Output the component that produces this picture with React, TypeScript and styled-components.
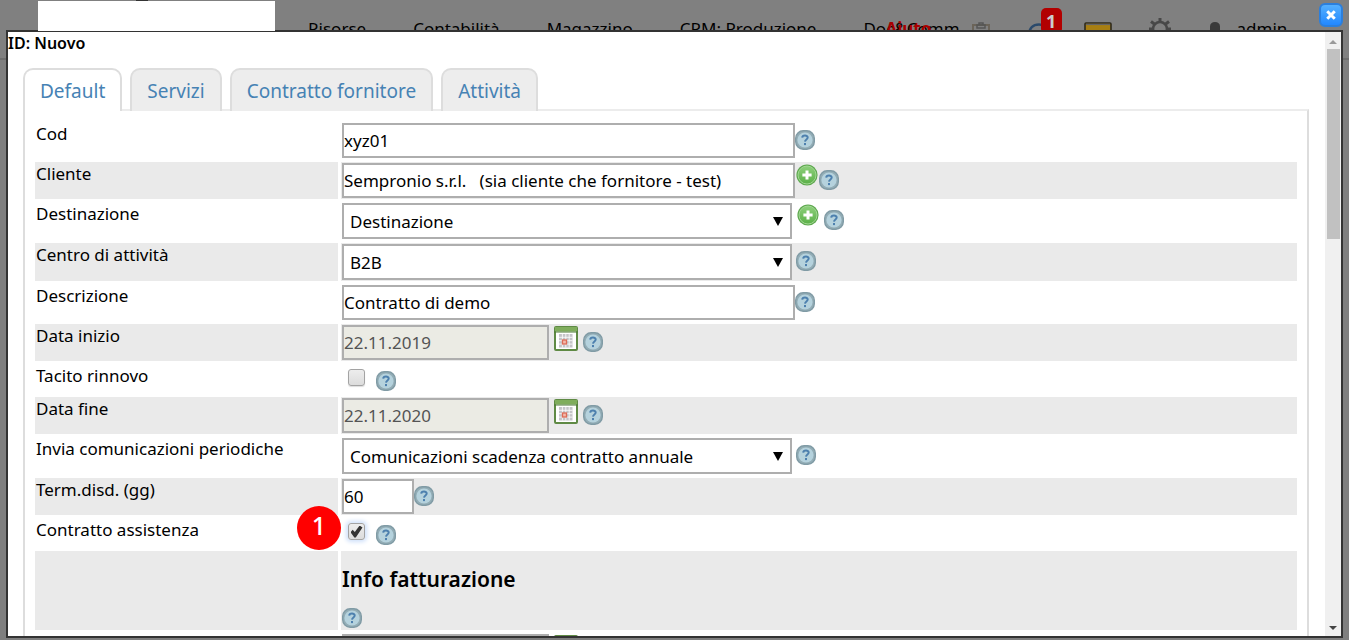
import React from "react";
import styled, { createGlobalStyle, css } from "styled-components";

const Global = createGlobalStyle`
  * { box-sizing: border-box; }
  html, body { margin: 0; height: 100%; overflow: hidden; }
  body { background: #7f7f7f; }
  body, button, input, select {
    font-family: "Noto Sans", "Open Sans", sans-serif;
    font-size: 17px;
    color: #000;
  }
`;

/* Application bar, dimmed behind the dialog */
const AppBar = styled.header`
  display: flex;
  align-items: center;
  height: 60px;
  padding-left: 38px;
  background: #808080;
  border-bottom: 2px solid #6e6e6e;
`;

const Logo = styled.div`
  position: relative;
  z-index: 3;
  flex: none;
  align-self: flex-start;
  width: 237px;
  height: 30px;
  margin: 1px 33px 0 0;
  background: #fff;
  &::before {
    content: "";
    position: absolute;
    top: -1px;
    left: 98px;
    width: 12px;
    height: 1px;
    background: #333;
  }
`;

const Nav = styled.nav`
  display: flex;
  gap: 47px;
`;

const NavLink = styled.a`
  position: relative;
  line-height: 24px;
  color: #000;
  text-decoration: none;
  white-space: nowrap;
`;

const HelpTag = styled.b`
  position: absolute;
  top: 0;
  left: 22px;
  color: #a80000;
`;

const Tools = styled.div`
  display: flex;
  align-items: center;
  gap: 36px;
  margin-left: 12px;
`;

const Tool = styled.button`
  position: relative;
  display: flex;
  padding: 0;
  border: 0;
  background: none;
`;

const Counter = styled.span`
  position: absolute;
  top: -12px;
  left: 15px;
  width: 21px;
  height: 26px;
  border-radius: 5px;
  background: #b20000;
  color: #ccc;
  font-size: 18px;
  font-weight: 700;
  line-height: 26px;
  text-align: center;
`;

const User = styled.a`
  display: flex;
  align-items: center;
  gap: 15px;
  line-height: 24px;
  color: #000;
  text-decoration: none;
`;

/* Dialog */
const Dialog = styled.section`
  position: fixed;
  inset: 30px 6px 2px 6px;
  z-index: 2;
  display: flex;
  border: 2px solid #333;
  background: #fff;
`;

const Close = styled.button`
  position: fixed;
  top: 3px;
  right: 6px;
  z-index: 4;
  display: flex;
  align-items: center;
  justify-content: center;
  width: 24px;
  height: 24px;
  padding: 0;
  border: 2px solid #2c7fdc;
  border-radius: 6px;
  background: linear-gradient(#55b0ff, #2388ff);
`;

const Scroller = styled.div`
  flex: 1;
  min-width: 0;
  overflow: hidden;
`;

const Title = styled.h1`
  margin: 0;
  font-size: 16px;
  font-weight: 600;
  line-height: 22px;
`;

const Tabs = styled.div`
  position: relative;
  z-index: 1;
  display: flex;
  gap: 8px;
  margin: 14px 15px -2px;
`;

const Tab = styled.button<{ $active?: boolean }>`
  height: 43px;
  padding: 0 15px;
  border: 2px solid #ddd;
  border-bottom: 0;
  border-radius: 10px 10px 0 0;
  background: ${(p) => (p.$active ? "#fff" : "#ededed")};
  color: #4682b4;
  font-size: 19px;
  line-height: 38px;
  white-space: nowrap;
`;

const Panel = styled.form`
  display: grid;
  gap: 3px;
  margin: 0 16px 0 15px;
  padding: 11px 10px;
  border: 2px solid #ddd;
  border-top-color: #ececec;
`;

const Row = styled.div<{ $shade?: boolean }>`
  position: relative;
  display: grid;
  grid-template-columns: 303px 1fr;
  gap: 3px;
  & > * {
    background: ${(p) => (p.$shade ? "#eaeaea" : "#fff")};
  }
`;

const Caption = styled.label`
  padding-left: 1px;
  line-height: 24px;
`;

const Field = styled.div<{ $gap?: number }>`
  display: flex;
  align-items: flex-start;
  gap: ${(p) => p.$gap ?? 0}px;
  min-height: 30px;
  padding: 1px;
`;

const box = css`
  border: 2px solid #aeaeae;
  border-radius: 0;
  background: #fff;
`;

const TextBox = styled.input<{ $size: "wide" | "date" | "short" }>`
  ${box}
  width: ${(p) => ({ wide: 453, date: 207, short: 72 })[p.$size]}px;
  height: 35px;
  padding: 0;
  &:disabled {
    background: #ebebe4;
    color: #545454;
  }
`;

const SelectWrap = styled.div`
  position: relative;
  width: 450px;
  &::after {
    content: "";
    position: absolute;
    top: 14px;
    right: 9px;
    border: 5px solid transparent;
    border-top: 9px solid #000;
    border-bottom: 0;
    pointer-events: none;
  }
`;

const Select = styled.select`
  ${box}
  display: block;
  appearance: none;
  width: 100%;
  height: 36px;
  padding: 0 24px 0 6px;
`;

const Check = styled.input<{ $glow?: boolean }>`
  appearance: none;
  display: grid;
  place-items: center;
  width: 17px;
  height: 17px;
  margin: 4px 6px 0;
  border: 1px solid #a3a3a3;
  border-radius: 3px;
  background: linear-gradient(#ededed, #dcdcdc);
  box-shadow: ${(p) => (p.$glow ? "0 0 4px 2px #cfe0fa" : "0 1px 1px #ddd")};
  &:checked::before {
    content: "";
    width: 12px;
    height: 12px;
    background: #333;
    clip-path: polygon(0 56%, 18% 36%, 36% 54%, 76% 0, 100% 16%, 44% 100%, 32% 100%);
  }
`;

const IconButton = styled.button<{ $top: number }>`
  display: flex;
  flex: none;
  margin: ${(p) => p.$top}px 0 0;
  padding: 0;
  border: 0;
  background: none;
`;

const Heading = styled.h2`
  margin: 0;
  font-size: 21px;
  font-weight: 600;
  line-height: 56px;
`;

const Section = styled.div`
  padding: 0 1px;
  height: 79px;
`;

const Step = styled.span`
  && {
    background: #f00;
  }
  position: absolute;
  z-index: 1;
  top: -12px;
  left: 262px;
  width: 44px;
  height: 44px;
  border-radius: 50%;
  color: #fff;
  font-size: 25px;
  font-weight: 500;
  line-height: 38px;
  text-align: center;
`;

const Bar = styled.div`
  display: flex;
  flex-direction: column;
  align-items: center;
  width: 16px;
  padding: 8px 0 6px;
  background: #f0f0f0;
`;

const Arrow = styled.i<{ $down?: boolean }>`
  border: 4px solid transparent;
  ${(p) =>
    p.$down
      ? css`
          margin-top: auto;
          border-top-color: #444;
          border-bottom: 0;
        `
      : css`
          border-bottom-color: #999;
          border-top: 0;
        `}
`;

const Thumb = styled.div`
  width: 13px;
  height: 190px;
  margin-top: 5px;
  background: #c1c1c1;
`;

const Help = ({ top = 7 }: { top?: number }) => (
  <IconButton type="button" $top={top} aria-label="Aiuto">
    <svg width="20" height="20" viewBox="0 0 20 20">
      <rect x=".7" y=".7" width="18.6" height="18.6" rx="7.5" fill="#93adb6" stroke="#809ba5" strokeWidth="1.4" />
      <circle cx="10" cy="10" r="7.6" fill="#b5d2dd" />
      <path d="M7.200 7.600c.2-2.800 5.600-2.700 5.500 0 0 1.800-2.600 1.900-2.700 4" fill="none" stroke="#4d80ae" strokeWidth="2" />
      <rect x="9" y="13" width="2" height="2.100" fill="#4d80ae" />
    </svg>
  </IconButton>
);

const Add = () => (
  <IconButton type="button" $top={1} aria-label="Aggiungi">
    <svg width="22" height="22" viewBox="0 0 22 22">
      <defs>
        <linearGradient id="leaf" x1="0" y1="0" x2="0" y2="1">
          <stop offset="0" stopColor="#8ed07c" />
          <stop offset="1" stopColor="#5bb048" />
        </linearGradient>
      </defs>
      <circle cx="11" cy="11" r="10.6" fill="#5ea84e" />
      <circle cx="11" cy="11" r="9" fill="url(#leaf)" stroke="#a2d894" strokeWidth="1" />
      <path d="M11 6.400v9.200M6.400 11h9.200" stroke="#fff" strokeWidth="3" />
    </svg>
  </IconButton>
);

const Calendar = () => (
  <IconButton type="button" $top={1} aria-label="Calendario">
    <svg width="24" height="25" viewBox="0 0 24 25">
      <rect x="1" y="1" width="22" height="23" rx="1" fill="#fff" stroke="#5f8a45" strokeWidth="2" />
      <path d="M1 1h22v4.500H1z" fill="#7fad5c" />
      <path d="M0 6h24" stroke="#4c7a35" strokeWidth="1" />
      <rect x="5" y="8" width="13.500" height="13.500" fill="#c4c4c8" />
      <path d="M5 11.300h13.500M5 14.700h13.500M5 18.100h13.500M8.400 8v13.500M11.800 8v13.500M15.200 8v13.500" stroke="#fff" strokeWidth=".8" />
      <rect x="8.500" y="14" width="4" height="4" fill="#f4b9aa" stroke="#dd6b57" strokeWidth="1.300" />
    </svg>
  </IconButton>
);

const Choice = ({ id, value }: { id: string; value: string }) => (
  <SelectWrap>
    <Select id={id} defaultValue={value}>
      <option>{value}</option>
    </Select>
  </SelectWrap>
);

const DateField = ({ id, value }: { id: string; value: string }) => (
  <Field $gap={5}>
    <TextBox id={id} $size="date" defaultValue={value} disabled />
    <Calendar />
    <Help />
  </Field>
);

export default function App() {
  return (
    <>
      <Global />
      <AppBar>
        <Logo />
        <Nav>
          <NavLink href="#risorse">Risorse</NavLink>
          <NavLink href="#contabilita">Contabilità</NavLink>
          <NavLink href="#magazzino">Magazzino</NavLink>
          <NavLink href="#crm">CRM: Produzione</NavLink>
          <NavLink href="#doc">
            Doc&amp;Comm<HelpTag>Aiuto</HelpTag>
          </NavLink>
        </Nav>
        <Tools>
          <Tool aria-label="Appunti">
            <svg width="18" height="14" viewBox="0 0 18 14" fill="none" stroke="#6b6459" strokeWidth="2">
              <path d="M1 3h16v10H1z" />
              <path d="M5 3h8v3H5zM7 3V1h4v2" stroke="#555" strokeWidth="1.500" />
            </svg>
          </Tool>
          <Tool aria-label="Aggiorna">
            <svg width="22" height="18" viewBox="0 0 22 18" fill="none" stroke="#2b4a6b" strokeWidth="2.400">
              <path d="M3 15C3 8 7 4.500 13 4.500s8 4 8 9" />
            </svg>
            <Counter>1</Counter>
          </Tool>
          <Tool aria-label="Messaggi">
            <svg width="28" height="14" viewBox="0 0 28 14">
              <rect x="1" y="1" width="26" height="12" rx="1" fill="#a87f12" stroke="#2e2a1c" strokeWidth="1.600" />
              <path d="M2 2.400h24" stroke="#666" strokeWidth="1.400" />
            </svg>
          </Tool>
          <Tool aria-label="Impostazioni">
            <svg width="24" height="24" viewBox="0 0 24 24" fill="none" stroke="#484848">
              <circle cx="12" cy="12" r="7" strokeWidth="2.600" />
              <path d="M12 1v4M12 19v4M1 12h4M19 12h4M3 4.500l4 3M17 17l3.500 3.500M21 4.500l-4 3M7 17l-3.500 3.500" strokeWidth="3" />
            </svg>
          </Tool>
          <User href="#admin">
            <svg width="14" height="18" viewBox="0 0 14 18" fill="#3a3a3a">
              <path d="M2 14V6.500C2 3.500 4 2 7 2s5 1.500 5 4.500V14l2 4H0z" />
            </svg>
            admin
          </User>
        </Tools>
      </AppBar>

      <Close aria-label="Chiudi">
        <svg width="10" height="10" viewBox="0 0 12 12" stroke="#fff" strokeWidth="3.600">
          <path d="M1.500 1.500l9 9M10.500 1.500l-9 9" />
        </svg>
      </Close>

      <Dialog role="dialog" aria-label="ID: Nuovo">
        <Scroller>
          <Title>ID: Nuovo</Title>
          <Tabs role="tablist">
            <Tab role="tab" $active>Default</Tab>
            <Tab role="tab">Servizi</Tab>
            <Tab role="tab">Contratto fornitore</Tab>
            <Tab role="tab">Attività</Tab>
          </Tabs>
          <Panel>
            <Row>
              <Caption htmlFor="cod">Cod</Caption>
              <Field>
                <TextBox id="cod" $size="wide" defaultValue="xyz01" />
                <Help />
              </Field>
            </Row>
            <Row $shade>
              <Caption htmlFor="cliente">Cliente</Caption>
              <Field $gap={1}>
                <TextBox
                  id="cliente"
                  $size="wide"
                  defaultValue={"Sempronio s.r.l. \u00a0 (sia cliente che fornitore - test)"}
                />
                <Add />
                <Help />
              </Field>
            </Row>
            <Row>
              <Caption htmlFor="destinazione">Destinazione</Caption>
              <Field $gap={5}>
                <Choice id="destinazione" value="Destinazione" />
                <Add />
                <Help />
              </Field>
            </Row>
            <Row $shade>
              <Caption htmlFor="centro">Centro di attività</Caption>
              <Field $gap={4}>
                <Choice id="centro" value="B2B" />
                <Help />
              </Field>
            </Row>
            <Row>
              <Caption htmlFor="descrizione">Descrizione</Caption>
              <Field>
                <TextBox id="descrizione" $size="wide" defaultValue="Contratto di demo" />
                <Help />
              </Field>
            </Row>
            <Row $shade>
              <Caption htmlFor="inizio">Data inizio</Caption>
              <DateField id="inizio" value="22.11.2019" />
            </Row>
            <Row>
              <Caption htmlFor="tacito">Tacito rinnovo</Caption>
              <Field $gap={5}>
                <Check id="tacito" type="checkbox" />
                <Help top={6} />
              </Field>
            </Row>
            <Row $shade>
              <Caption htmlFor="fine">Data fine</Caption>
              <DateField id="fine" value="22.11.2020" />
            </Row>
            <Row>
              <Caption htmlFor="invia">Invia comunicazioni periodiche</Caption>
              <Field $gap={4}>
                <Choice id="invia" value="Comunicazioni scadenza contratto annuale" />
                <Help />
              </Field>
            </Row>
            <Row $shade>
              <Caption htmlFor="disdetta">Term.disd. (gg)</Caption>
              <Field>
                <TextBox id="disdetta" $size="short" defaultValue="60" />
                <Help />
              </Field>
            </Row>
            <Row>
              <Caption htmlFor="assistenza">Contratto assistenza</Caption>
              <Field $gap={5}>
                <Check id="assistenza" type="checkbox" $glow defaultChecked />
                <Help top={6} />
              </Field>
              <Step>1</Step>
            </Row>
            <Row $shade>
              <div />
              <Section>
                <Heading>Info fatturazione</Heading>
                <Help top={1} />
              </Section>
            </Row>
            <Row>
              <div />
              <Field $gap={5}>
                <TextBox $size="date" aria-label="Data fatturazione" disabled />
                <Calendar />
              </Field>
            </Row>
          </Panel>
        </Scroller>
        <Bar aria-hidden="true">
          <Arrow />
          <Thumb />
          <Arrow $down />
        </Bar>
      </Dialog>
    </>
  );
}
